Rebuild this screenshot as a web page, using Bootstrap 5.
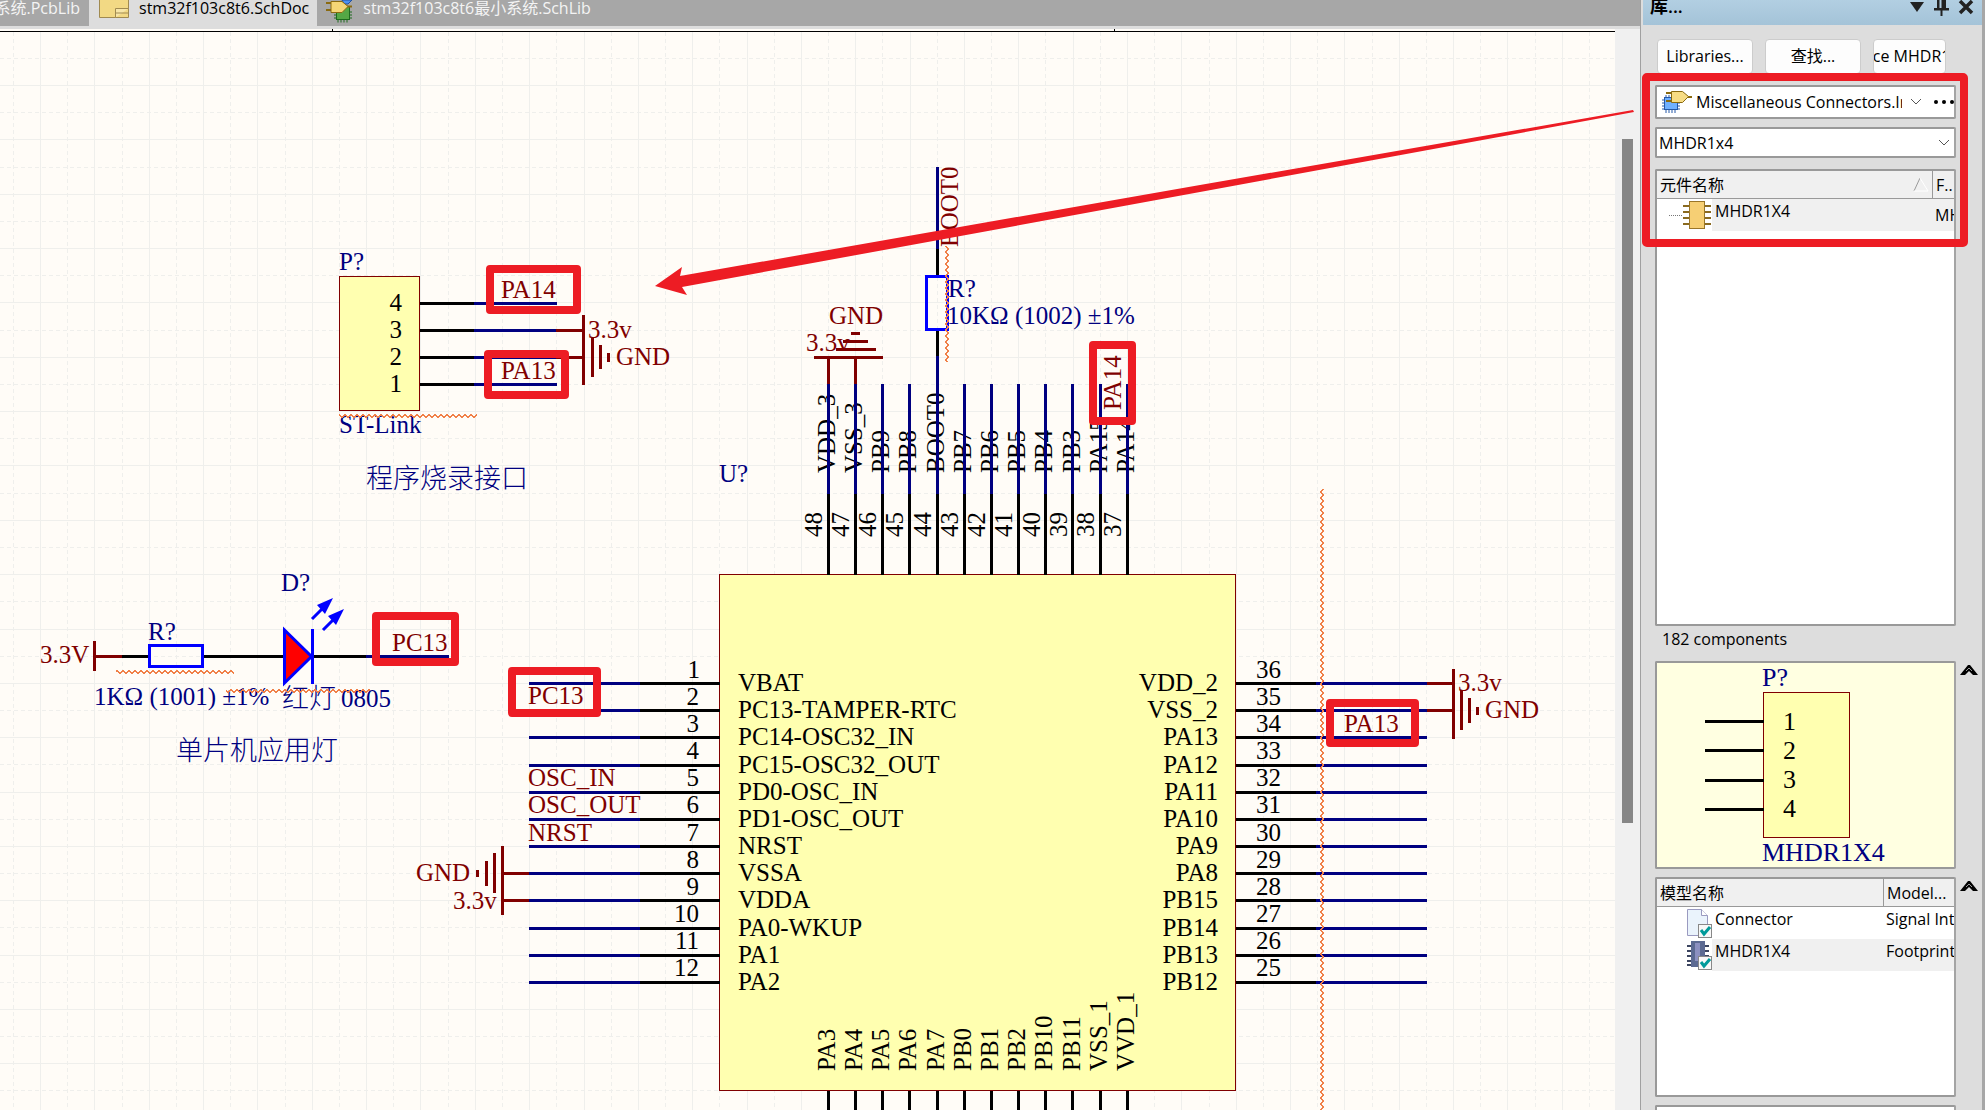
<!DOCTYPE html>
<html lang="zh-CN">
<head>
<meta charset="utf-8">
<meta name="viewport" content="width=device-width, initial-scale=1">
<title>stm32f103c8t6.SchDoc</title>
<link href="https://cdn.jsdelivr.net/npm/bootstrap@5.3.0/dist/css/bootstrap.min.css" rel="stylesheet">
<script src="https://cdn.jsdelivr.net/npm/bootstrap@5.3.0/dist/js/bootstrap.bundle.min.js"></script>
<style>
body{font-family:"Open Sans","Noto Sans CJK SC",sans-serif;font-size:16px;line-height:20px;color:#000;background:#ddd}
.editor{min-width:0}
.tabstrip{height:26px;background:#a7a7a7}
.tabstrip a{color:#f4f4f4;line-height:16px;text-decoration:none;white-space:nowrap;height:26px}
.tabstrip a.active{background:#ddd;color:#000;padding:0 8px 0 10px}
.tabstrip svg{margin-right:8px}
.tab-first{width:89px;direction:rtl;overflow:hidden;padding-right:9px}
.tab-first bdi{direction:ltr}
.sheet-top{height:3px;background:#ddd}
.sheet{background:#f0f0f0;overflow:hidden;min-height:0}
.schematic{overflow:visible;z-index:1;min-width:0;height:1081px}
.scroller{width:25px;padding:110px 7px 0}
.scroller div{height:684px;width:11px;background:#868686}
.schematic text{font:25px "Liberation Serif","Noto Sans CJK SC",serif;font-kerning:normal;fill:#000}
.schematic .net text{fill:#800000}
.schematic .des text,.part text.des{fill:#000080}
.schematic .han{font-size:27px;font-weight:300}
.end{text-anchor:end}
.wire{stroke:#000080;stroke-width:3;fill:none}
.lead-line{stroke:#000;stroke-width:3;fill:none}
.power{stroke:#800000;stroke-width:3;fill:none}
.sym{stroke:#00f;stroke-width:3;fill:none}
.led{fill:#f00}
.body-box{fill:#ffffb0;stroke:#800000}
.squiggle{fill:none;stroke:#f08048;shape-rendering:crispEdges}
.callout{stroke:#ed1c24;stroke-width:8;stroke-linejoin:round;fill:none}
.panel{width:345px;border-left:1px solid #a0a0a0;border-right:3px solid #a7a7a7;background:#ddd}
.panel-head{height:25px;margin-left:2px;padding:0 8px 0 7px;background:linear-gradient(#b2cfe2,#a4c3d8);font-weight:600;font-size:18px;line-height:12px}
.panel-body{padding:14px 26px 0 14px}
.tools{gap:12px;padding-left:2px}
.tool-btn{height:35px;background:#fdfdfd;border:1px solid #ccc;border-radius:4px;padding:0 0 2px;overflow:hidden;white-space:nowrap}
.w-lib{width:96px}
.w-place{width:73px}
.panel-body .box{background:#fff;border:2px solid #999;border-right-color:#a4a4a4;border-radius:2px}
.lib-box{height:34px;margin-top:11px;padding-left:5px}
.part-box{height:31px}
.plain{border:0;background:transparent;appearance:none;padding:0;min-width:0;color:#000}
.part-box .plain{padding-left:2px}
.list-box{height:457px;margin-top:11px}
.panel-body .preview-box{height:208px;background:#ffffe1}
.model-box{height:220px}
.grid-table{table-layout:fixed;width:100%;border-collapse:separate;border-spacing:0}
.grid-table th{font-weight:400;background:#f0f0f0;border-bottom:1px solid #999;height:28px;padding:0 3px;overflow:hidden;white-space:nowrap}
.grid-table th+th{border-left:1px solid #999}
.grid-table td{height:32px;padding:0 0 0 3px;overflow:hidden;white-space:nowrap}
.grid-table td.tree{padding:0 0 0 10px}
.model-box td{vertical-align:top;line-height:24px}
.picked td:not(.tree),.picked .cellname{background:#f0f0f0}
.cellname{height:32px;line-height:24px;padding-left:3px}
.col-place{width:22px}
.col-model{width:71px}
.part text{font:26px "Liberation Serif",serif;font-kerning:none}
.count{height:35px;line-height:27px;padding-left:7px}
.fold{right:-24px;top:2px;width:18px;height:11px}
.marker{border:8px solid #ed1c24;border-radius:5px;left:1px;right:14px;top:73px;height:174px;pointer-events:none}
</style>
</head>
<body class="vh-100 overflow-hidden d-flex">

<main class="editor flex-fill d-flex flex-column">
  <nav class="tabstrip d-flex">
    <a href="#" class="tab-first"><bdi>系统.PcbLib</bdi></a>
    <a href="#" class="active d-flex">
      <svg width="32" height="20" aria-hidden="true"><path d="M.5-1h29v18.500H.5z" fill="#f2d984" stroke="#a08a50"/><path d="M16.500 17.500v-9h13M16.500 13h13" fill="#f7e6a8" stroke="#a08a50"/></svg>
      <span>stm32f103c8t6.SchDoc</span></a>
    <a href="#" class="d-flex ps-2">
      <svg width="30" height="24" aria-hidden="true"><path d="M17 0h10l-4 4h-4z" fill="#4d90f0" stroke="#2050a0"/><path d="M13 8v14.500M16 8v14.500M19 8v14.500M22 8v14.500M9 12h18M9 15h18M9 18h18" stroke="#1e6b1e"/><rect x="11.500" y="6.500" width="13" height="13" fill="#55a845" stroke="#1e6b1e"/><path d="M1 3h6M1 10h6M22 6.500h5" stroke="#8a6a10" stroke-width="2"/><path d="M6 1.500h11l6 5-6 6H6z" fill="#f5d676" stroke="#8a6a10"/></svg>
      <span>stm32f103c8t6最小系统.SchLib</span></a>
  </nav>
  <div class="sheet-top"></div>
  <div class="sheet d-flex flex-fill">
    <svg class="schematic flex-fill position-relative" role="img" aria-label="原理图">
      <defs>
        <pattern id="wavH" width="6" height="4" patternUnits="userSpaceOnUse"><path class="squiggle" d="M0 3.500l3-3 3 3"/></pattern>
        <pattern id="wavV" width="4" height="6" patternUnits="userSpaceOnUse"><path class="squiggle" d="M.5 0l3 3-3 3"/></pattern>
      </defs>
      <rect width="100%" height="1200" fill="#fffcf7"/>
      <svg width="100%" height="1081" overflow="hidden"><g transform="translate(0 -29)" fill="none" stroke="#efefec" shape-rendering="crispEdges"><path id="gridSolid"/><path id="gridDash" stroke-dasharray="4 3"/></g></svg>
      <g transform="translate(0 -29)">
        <path d="M332.500 29v2M1114.500 29v2" stroke="#000"/>
        <rect y="31" width="100%" height="1"/>

        <!-- programming header -->
        <rect class="body-box" x="339.500" y="276.500" width="80" height="134"/>
        <path class="lead-line" d="M420 303.500h54M420 330.500h54M420 357.500h54M420 384.500h54"/>
        <path class="wire" d="M474 303.500h83M474 330.500h82M474 357.500h82M474 384.500h83"/>
        <path class="power" d="M556 330.500h27M556 357.500h27M583.500 315v70M592.500 337v40M600.500 345v24M608.500 353v9"/>
        <g class="end"><text x="402" y="311">4</text><text x="402" y="338">3</text><text x="402" y="365">2</text><text x="402" y="392">1</text></g>
        <g class="des"><text x="339" y="270">P?</text><text x="339" y="433">ST-Link</text><text class="han" x="366" y="488">程序烧录接口</text></g>
        <g class="net"><text x="501" y="298">PA14</text><text x="501" y="379">PA13</text><text x="588" y="338">3.3v</text><text x="616" y="365">GND</text></g>
        <g transform="translate(0 414)"><rect x="339" width="138" height="4" fill="url(#wavH)"/></g>

        <!-- indicator LED -->
        <path class="power" d="M94.500 641v30M95 656.500h27"/>
        <path class="lead-line" d="M122 656.500h26M204 656.500h80M314 656.500h52"/>
        <path class="wire" d="M366 656.500h83"/>
        <rect class="sym" x="149.500" y="645.500" width="53" height="21"/>
        <path class="sym led" d="M284.500 630v53l27-26.500z"/>
        <path class="sym" d="M312.500 629v55M312 619l11-11M323 630l11-11"/>
        <path d="M333 598l-16 7 8 9zM344 609l-16 7 8 9z" fill="#00f"/>
        <g class="net"><text x="40" y="663">3.3V</text><text x="392" y="651">PC13</text></g>
        <g class="des"><text x="148" y="640">R?</text><text x="281" y="591">D?</text><text x="94" y="705">1KΩ (1001) ±1%</text><text class="han" x="282" y="708">红灯</text><text x="341" y="707">0805</text><text class="han" x="176" y="760">单片机应用灯</text></g>
        <g transform="translate(0 670)"><rect x="116" width="118" height="4" fill="url(#wavH)"/></g>
        <g transform="translate(0 689)"><rect x="226" width="144" height="4" fill="url(#wavH)"/></g>

        <!-- microcontroller body -->
        <rect class="body-box" x="719.500" y="574.500" width="516" height="516"/>
        <g class="des"><text x="719" y="482">U?</text></g>

        <!-- left pins -->
        <path class="lead-line" d="M640 683.500h80M640 710.500h80M640 737.500h80M640 765.500h80M640 792.500h80M640 819.500h80M640 846.500h80M640 873.500h80M640 900.500h80M640 928.500h80M640 955.500h80M640 982.500h80"/>
        <path class="wire" d="M529 683.500h111M529 710.500h111M529 737.500h111M529 765.500h111M529 792.500h111M529 819.500h111M529 846.500h111M529 873.500h111M529 900.500h111M529 928.500h111M529 955.500h111M529 982.500h111"/>
        <g class="end"><text x="700" y="678">1</text><text x="699" y="705">2</text><text x="699" y="732">3</text><text x="699" y="759">4</text><text x="699" y="786">5</text><text x="699" y="813">6</text><text x="699" y="841">7</text><text x="699" y="868">8</text><text x="699" y="895">9</text><text x="699" y="922">10</text><text x="699" y="949">11</text><text x="699" y="976">12</text></g>
        <g><text x="738" y="691">VBAT</text><text x="738" y="718">PC13-TAMPER-RTC</text><text x="738" y="745">PC14-OSC32_IN</text><text x="738" y="773">PC15-OSC32_OUT</text><text x="738" y="800">PD0-OSC_IN</text><text x="738" y="827">PD1-OSC_OUT</text><text x="738" y="854">NRST</text><text x="738" y="881">VSSA</text><text x="738" y="908">VDDA</text><text x="738" y="936">PA0-WKUP</text><text x="738" y="963">PA1</text><text x="738" y="990">PA2</text></g>
        <g class="net"><text x="528" y="704">PC13</text><text x="528" y="786">OSC_IN</text><text x="528" y="813">OSC_OUT</text><text x="528" y="841">NRST</text><text x="416" y="881">GND</text><text x="453" y="909">3.3v</text></g>
        <path class="power" d="M503 873.500h26M503 900.500h26M502.500 846v69M494.500 853v40M486.500 861v25M477.500 870v7"/>

        <!-- right pins -->
        <path class="lead-line" d="M1236 683.500h80M1236 710.500h80M1236 737.500h80M1236 765.500h80M1236 792.500h80M1236 819.500h80M1236 846.500h80M1236 873.500h80M1236 900.500h80M1236 928.500h80M1236 955.500h80M1236 982.500h80"/>
        <path class="wire" d="M1316 683.500h111M1316 710.500h111M1316 737.500h111M1316 765.500h111M1316 792.500h111M1316 819.500h111M1316 846.500h111M1316 873.500h111M1316 900.500h111M1316 928.500h111M1316 955.500h111M1316 982.500h111"/>
        <g><text x="1256" y="678">36</text><text x="1256" y="705">35</text><text x="1256" y="732">34</text><text x="1256" y="759">33</text><text x="1256" y="786">32</text><text x="1256" y="813">31</text><text x="1256" y="841">30</text><text x="1256" y="868">29</text><text x="1256" y="895">28</text><text x="1256" y="922">27</text><text x="1256" y="949">26</text><text x="1256" y="976">25</text></g>
        <g class="end"><text x="1218" y="691">VDD_2</text><text x="1218" y="718">VSS_2</text><text x="1218" y="745">PA13</text><text x="1218" y="773">PA12</text><text x="1218" y="800">PA11</text><text x="1218" y="827">PA10</text><text x="1218" y="854">PA9</text><text x="1218" y="881">PA8</text><text x="1218" y="908">PB15</text><text x="1218" y="936">PB14</text><text x="1218" y="963">PB13</text><text x="1218" y="990">PB12</text></g>
        <path class="power" d="M1427 683.500h27M1427 710.500h27M1453.500 669v70M1461.500 690v40M1469.500 698v25M1477.500 707v8"/>
        <g class="net"><text x="1458" y="691">3.3v</text><text x="1485" y="718">GND</text><text x="1344" y="732">PA13</text></g>
        <g transform="translate(1320 0)"><rect y="489" width="4" height="640" fill="url(#wavV)"/></g>

        <!-- top and bottom pins: x runs up the page inside the rotated groups -->
        <g transform="rotate(-90)">
          <g><text x="-473" y="835">VDD_3</text><text x="-473" y="862">VSS_3</text><text x="-473" y="889">PB9</text><text x="-473" y="916">PB8</text><text x="-473" y="944">BOOT0</text><text x="-473" y="971">PB7</text><text x="-473" y="998">PB6</text><text x="-473" y="1025">PB5</text><text x="-473" y="1052">PB4</text><text x="-473" y="1080">PB3</text><text x="-473" y="1107">PA15</text><text x="-473" y="1134">PA14</text></g>
          <g><text x="-537" y="822">48</text><text x="-537" y="849">47</text><text x="-537" y="876">46</text><text x="-537" y="903">45</text><text x="-537" y="931">44</text><text x="-537" y="958">43</text><text x="-537" y="985">42</text><text x="-537" y="1012">41</text><text x="-537" y="1040">40</text><text x="-537" y="1067">39</text><text x="-537" y="1094">38</text><text x="-537" y="1121">37</text></g>
          <g><text x="-1071" y="835">PA3</text><text x="-1071" y="862">PA4</text><text x="-1071" y="889">PA5</text><text x="-1071" y="916">PA6</text><text x="-1071" y="944">PA7</text><text x="-1071" y="971">PB0</text><text x="-1071" y="998">PB1</text><text x="-1071" y="1025">PB2</text><text x="-1071" y="1052">PB10</text><text x="-1071" y="1080">PB11</text><text x="-1071" y="1107">VSS_1</text><text x="-1071" y="1134">VVD_1</text></g>
        </g>
        <path class="wire" d="M828.500 384v110M855.500 384v110M882.500 384v110M909.500 384v110M937.500 356v138M964.500 384v110M991.500 384v110M1018.500 384v110M1045.500 384v110M1072.500 384v110M1100.500 384v110M1127.500 384v110M937.500 167v82"/>
        <path class="lead-line" d="M828.500 494v81M855.500 494v81M882.500 494v81M909.500 494v81M937.500 494v81M964.500 494v81M991.500 494v81M1018.500 494v81M1045.500 494v81M1072.500 494v81M1100.500 494v81M1127.500 494v81M937.500 249v26M937.500 331v25"/>
        <path class="lead-line" d="M828.500 1091v40M855.500 1091v40M882.500 1091v40M909.500 1091v40M937.500 1091v40M964.500 1091v40M991.500 1091v40M1018.500 1091v40M1045.500 1091v40M1072.500 1091v40M1100.500 1091v40M1127.500 1091v40"/>
        <g class="net" transform="rotate(-90)"><text x="-247" y="958">BOOT0</text><text x="-410" y="1121">PA14</text></g>
        <rect class="sym" x="926.500" y="276.500" width="21" height="53"/>
        <g class="des"><text x="948" y="297">R?</text><text x="947" y="324">10KΩ (1002) ±1%</text></g>
        <g transform="translate(945 0)"><rect y="246" width="4" height="116" fill="url(#wavV)"/></g>
        <g class="net"><text x="829" y="324">GND</text><text x="806" y="351">3.3v</text></g>
        <path class="power" d="M814 357.500h69M836 349.500h40M843 341.500h25M851 333.500h9M828.500 358v26M855.500 358v26"/>

        <!-- tutorial highlights -->
        <path class="callout" d="M490 269h87v41h-87zM488 354h77v41h-77zM376 616h79v46h-79zM512 671h85v42h-85zM1093 345h39v76h-39zM1330 703h85v40h-85z"/>
        <path d="M655 286l27-19-2 9L1200 185l433-75 1 2-434 80L682 287l5 8z" fill="#ed1c24"/>
      </g>
    </svg>
    <div class="scroller"><div></div></div>
  </div>
</main>

<aside class="panel position-relative flex-shrink-0 overflow-hidden">
  <div class="panel-head d-flex justify-content-between">
    <span>库...</span>
    <svg width="64" height="18" aria-hidden="true" fill="#222"><path d="M0 2h14l-7 10z"/><path d="M24 8h15v2.500H24zM27 0h9v9h-9zM30.500 10h2v6h-2z"/><path d="M29.500 0h2v8h-2z" fill="#b0cde0"/><path d="M50 1l12 12M62 1l-12 12" stroke="#222" stroke-width="3.500"/></svg>
  </div>
  <div class="panel-body">
    <div class="tools d-flex">
      <button class="tool-btn w-lib">Libraries...</button>
      <button class="tool-btn w-lib">查找...</button>
      <button class="tool-btn w-place d-flex justify-content-center align-items-center"><span>Place MHDR1X4</span></button>
    </div>
    <div class="box lib-box d-flex align-items-center mb-2">
      <svg width="30" height="24" class="flex-shrink-0" aria-hidden="true"><path d="M4 5v18M7 5v18M10 5v18M13 5v18M0 10h18M0 13h18M0 16h18M0 19h18" stroke="#2458a8"/><rect x="2.500" y="7.500" width="13" height="12" fill="#6fb0ff" stroke="#2458a8"/><path d="M4 3h6M4 11h6M24 7h6" stroke="#8a6a10" stroke-width="2"/><path d="M9.500 1.500h11l6 5-6 6h-11z" fill="#f7dc84" stroke="#8a6a10"/></svg>
      <select class="plain flex-fill ms-1" aria-label="库"><option>Miscellaneous Connectors.IntLib</option></select>
      <svg width="12" height="8" class="flex-shrink-0 mx-2" aria-hidden="true"><path d="M1 1l5 5 5-5" fill="none" stroke="#555"/></svg>
      <button class="plain flex-shrink-0 ms-1" aria-label="更多"><svg width="20" height="6" class="d-block"><circle cx="2" cy="3" r="2"/><circle cx="10" cy="3" r="2"/><circle cx="18" cy="3" r="2"/></svg></button>
    </div>
    <div class="box part-box d-flex align-items-center">
      <input class="plain flex-fill" type="text" value="MHDR1x4" aria-label="元件">
      <svg width="12" height="8" class="flex-shrink-0 me-1" aria-hidden="true"><path d="M1 1l5 5 5-5" fill="none" stroke="#555"/></svg>
    </div>
    <div class="box list-box">
      <table class="grid-table">
        <colgroup><col><col class="col-place"></colgroup>
        <thead><tr><th><span class="d-flex justify-content-between align-items-center">元件名称<svg width="16" height="14" aria-hidden="true"><path d="M1 13L7 0" stroke="#999"/><path d="M7 0l8 13H1" fill="none" stroke="#fff"/></svg></span></th><th>F..</th></tr></thead>
        <tbody><tr class="picked"><td class="tree"><span class="d-flex align-items-center"><svg width="45" height="30" class="flex-shrink-0" aria-hidden="true"><path d="M2 15.500h13" stroke="#777" stroke-dasharray="1 1"/><path d="M16 6h28M16 12h28M16 18h28M16 24h28" stroke="#8a6a20" stroke-width="2"/><rect x="22.500" y="1.500" width="15" height="27" fill="#f6cf74" stroke="#9a7628"/></svg><span class="cellname flex-fill">MHDR1X4</span></span></td><td>MHDR1X4</td></tr></tbody>
      </table>
    </div>
    <div class="count">182 components</div>
    <div class="box preview-box position-relative mb-2">
      <svg class="part d-block" width="100%" height="204" role="img" aria-label="MHDR1X4">
        <rect class="body-box" x="106.500" y="29.500" width="86" height="145"/>
        <path class="lead-line" d="M48 58.500h59M48 87.500h59M48 117.500h59M48 146.500h59"/>
        <text class="des" x="105" y="23">P?</text><text x="126" y="67">1</text><text x="126" y="96">2</text><text x="126" y="125">3</text><text x="126" y="154">4</text><text class="des" x="105" y="198">MHDR1X4</text>
      </svg>
      <button class="plain fold position-absolute" aria-label="折叠预览"><svg width="18" height="11" class="d-block"><path d="M0 10L8 0h2l8 10h-5L9 6l-4 4z"/><path d="M6 6l3-3 3 3" stroke="#999" fill="none"/></svg></button>
    </div>
    <div class="box model-box position-relative mb-2">
      <table class="grid-table">
        <colgroup><col><col class="col-model"></colgroup>
        <thead><tr><th>模型名称</th><th>Model...</th></tr></thead>
        <tbody>
          <tr><td class="tree"><span class="d-flex align-items-center"><svg width="45" height="32" class="flex-shrink-0" aria-hidden="true"><path d="M20.500 2.500h14l6 6v20h-20z" fill="#eaf3fc" stroke="#9a9ac0"/><path d="M34.500 2.500v6h6" fill="#fff" stroke="#9a9ac0"/><rect x="31.500" y="17.500" width="13" height="13" fill="#f8f8f8" stroke="#888"/><path d="M34 23l3 4 6-7" fill="none" stroke="#009a9a" stroke-width="3"/></svg><span class="cellname flex-fill">Connector</span></span></td><td>Signal Integrity</td></tr>
          <tr class="picked"><td class="tree"><span class="d-flex align-items-center"><svg width="45" height="32" class="flex-shrink-0" aria-hidden="true"><path d="M20 7h22M20 12h22M20 17h22M20 22h22M20 26h22" stroke="#3c4560" stroke-width="2"/><rect x="24" y="2" width="14" height="26" fill="#5c6a92"/><path d="M28 4h5v18h-5z" fill="#8c90c0"/><rect x="31.500" y="17.500" width="13" height="13" fill="#f8f8f8" stroke="#888"/><path d="M34 23l3 4 6-7" fill="none" stroke="#009a9a" stroke-width="3"/></svg><span class="cellname flex-fill">MHDR1X4</span></span></td><td>Footprint</td></tr>
        </tbody>
      </table>
      <button class="plain fold position-absolute" aria-label="折叠模型"><svg width="18" height="11" class="d-block"><path d="M0 10L8 0h2l8 10h-5L9 6l-4 4z"/><path d="M6 6l3-3 3 3" stroke="#999" fill="none"/></svg></button>
    </div>
    <div class="box model-box"></div>
  </div>
  <div class="marker position-absolute"></div>
</aside>

<script>
// Sheet grid: solid major lines with dashed lines halfway between them.
const pitch = 54.35, w = 2600, h = 1600;
let solid = '', dash = '';
for (let k = -1; k < 48; k++) {
  const x = Math.floor(40.5 + pitch * k) + .5, xd = Math.floor(40.5 + pitch * (k + .5)) + .5;
  const y = Math.floor(85.5 + pitch * k) + .5, yd = Math.floor(85.5 + pitch * (k + .5)) + .5;
  solid += `M${x} 32V${h}`; dash += `M${xd} 32V${h}`;
  if (y > 32) solid += `M0 ${y}H${w}`;
  if (yd > 32) dash += `M0 ${yd}H${w}`;
}
document.getElementById('gridSolid').setAttribute('d', solid);
document.getElementById('gridDash').setAttribute('d', dash);
</script>
</body>
</html>
